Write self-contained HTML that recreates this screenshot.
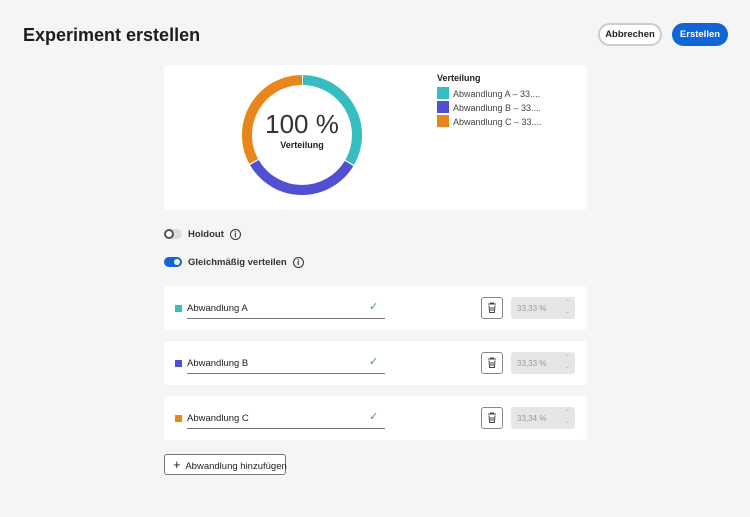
<!DOCTYPE html><html><head><style>
*{box-sizing:border-box;margin:0;padding:0}
body{width:750px;height:517px;background:#f5f5f5;font-family:"Liberation Sans",sans-serif;color:#222;position:relative;overflow:hidden}
.a{position:absolute}
h1{position:absolute;left:23px;top:25px;font-size:18px;font-weight:bold;color:#1d1d1d}
.btn{position:absolute;top:23px;height:23px;border-radius:12px;font-size:9.5px;font-weight:bold;text-align:center;line-height:19px;white-space:nowrap}
.card{position:absolute;left:164px;width:423px;background:#fff;border-radius:4px}
.row .sq{position:absolute;left:11px;top:19px;width:7px;height:7px}
.row .name{position:absolute;left:23px;top:17px;font-size:9.5px}
.row .line{position:absolute;left:23px;top:32px;width:198px;height:1px;background:#777}
.row .chk{position:absolute;left:205px;top:14px;color:#2d9d78;font-size:11px}
.row .del{position:absolute;left:317px;top:11px;width:22px;height:22px;border:1px solid #888;border-radius:3px}
.row .num{position:absolute;left:347px;top:11px;width:64px;height:22px;background:#e6e6e6;border-radius:3px;font-size:8px;color:#999;padding:7px 0 0 6px}
.row .num span{position:absolute;right:5px;font-size:6px;color:#aaa}
.info{display:inline-block;width:11px;height:11px;border:1.3px solid #333;border-radius:50%;font-size:8px;text-align:center;line-height:9px;font-weight:bold;vertical-align:middle;margin-left:6px}
.lbl{font-size:9.5px;font-weight:bold;color:#333;white-space:nowrap}
</style></head><body>
<h1>Experiment erstellen</h1>
<div class="btn" style="left:598px;width:64px;border:2px solid #ccc;background:#fff;color:#222">Abbrechen</div>
<div class="btn" style="left:672px;width:56px;background:#1066d6;color:#fff;line-height:23px">Erstellen</div>
<div class="card" style="top:65px;height:145px">
<svg class="a" style="left:76px;top:8px" width="124" height="124" viewBox="0 0 124 124">
<g transform="rotate(-90 62 62)" fill="none" stroke-width="10">
<circle cx="62" cy="62" r="55" stroke="#35bdc0" stroke-dasharray="114 232" stroke-dashoffset="-1"/>
<circle cx="62" cy="62" r="55" stroke="#5150d3" stroke-dasharray="114 232" stroke-dashoffset="-116.2"/>
<circle cx="62" cy="62" r="55" stroke="#e8861b" stroke-dasharray="114 232" stroke-dashoffset="-231.4"/>
</g></svg>
<div class="a" style="left:76px;top:44px;width:124px;text-align:center;font-size:26px;color:#333">100 %</div>
<div class="a" style="left:76px;top:75px;width:124px;text-align:center;font-size:9px;font-weight:bold">Verteilung</div>
<div class="a" style="left:273px;top:8px;font-size:9px;font-weight:bold">Verteilung</div>
<div class="a" style="left:273px;top:22px;font-size:9px;line-height:14px;color:#444;white-space:nowrap">
<div><span style="display:inline-block;width:12px;height:12px;background:#35bdc0;vertical-align:-2px;margin-right:4px"></span>Abwandlung A – 33....</div>
<div><span style="display:inline-block;width:12px;height:12px;background:#5150d3;vertical-align:-2px;margin-right:4px"></span>Abwandlung B – 33....</div>
<div><span style="display:inline-block;width:12px;height:12px;background:#e8861b;vertical-align:-2px;margin-right:4px"></span>Abwandlung C – 33....</div>
</div></div>
<div class="a" style="left:164px;top:229px;width:18px;height:10px;border-radius:5px;background:#ddd"><div style="position:absolute;left:0;top:0;width:10px;height:10px;border:2px solid #555;border-radius:50%;background:#fff"></div></div>
<div class="a lbl" style="left:188px;top:229px">Holdout<span class="info">i</span></div>
<div class="a" style="left:164px;top:257px;width:18px;height:10px;border-radius:5px;background:#1066d6"><div style="position:absolute;right:2px;top:2px;width:6px;height:6px;border-radius:50%;background:#fff"></div></div>
<div class="a lbl" style="left:188px;top:257px">Gleichmäßig verteilen<span class="info">i</span></div>
<div class="card row" style="top:286px;height:44px"><div class="sq" style="background:#35bdc0"></div><div class="name">Abwandlung A</div><div class="line"></div><div class="chk">✓</div><div class="del"><svg width="20" height="20" viewBox="0 0 20 20"><path d="M6 6h8M8.5 6V5h3v1M7 7.5l.6 7h4.8l.6-7M9 9v4M11 9v4" fill="none" stroke="#444" stroke-width="1"/></svg></div><div class="num">33,33 %<span style="top:2px">⌃</span><span style="top:11px">⌄</span></div></div>
<div class="card row" style="top:341px;height:44px"><div class="sq" style="background:#5150d3"></div><div class="name">Abwandlung B</div><div class="line"></div><div class="chk">✓</div><div class="del"><svg width="20" height="20" viewBox="0 0 20 20"><path d="M6 6h8M8.5 6V5h3v1M7 7.5l.6 7h4.8l.6-7M9 9v4M11 9v4" fill="none" stroke="#444" stroke-width="1"/></svg></div><div class="num">33,33 %<span style="top:2px">⌃</span><span style="top:11px">⌄</span></div></div>
<div class="card row" style="top:396px;height:44px"><div class="sq" style="background:#e8861b"></div><div class="name">Abwandlung C</div><div class="line"></div><div class="chk">✓</div><div class="del"><svg width="20" height="20" viewBox="0 0 20 20"><path d="M6 6h8M8.5 6V5h3v1M7 7.5l.6 7h4.8l.6-7M9 9v4M11 9v4" fill="none" stroke="#444" stroke-width="1"/></svg></div><div class="num">33,34 %<span style="top:2px">⌃</span><span style="top:11px">⌄</span></div></div>
<div class="a" style="left:164px;top:454px;width:122px;height:21px;border:1px solid #777;border-radius:3px;background:#fff;font-size:9.5px;line-height:19px;padding-left:8px;white-space:nowrap"><span style="font-size:13px">+</span>&nbsp; Abwandlung hinzufügen</div>
</body></html>
